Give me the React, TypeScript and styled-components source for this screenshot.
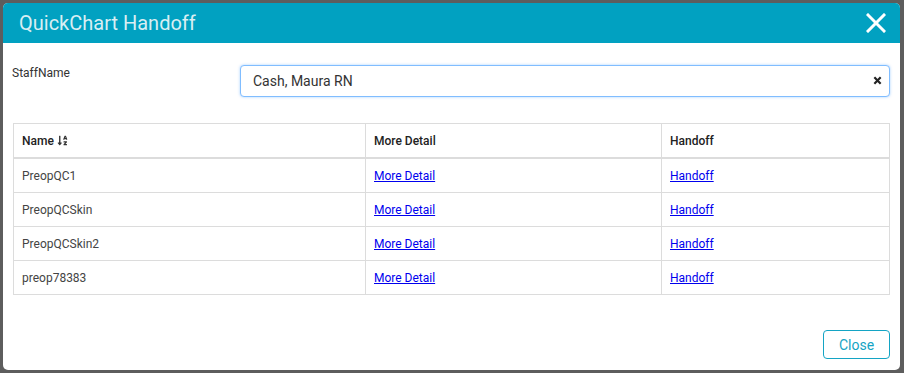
import styled, { createGlobalStyle } from 'styled-components'
import { FaSortAlphaDown } from 'react-icons/fa'

const GlobalStyle = createGlobalStyle`
  html, body {
    margin: 0;
    padding: 0;
    background: #5d5d5d;
    font-family: Roboto, 'Liberation Sans', sans-serif;
  }
`

const rows = ['PreopQC1', 'PreopQCSkin', 'PreopQCSkin2', 'preop78383']

const App = () => {
  return (
    <>
      <GlobalStyle />
      <Backdrop>
        <Modal>
          <Header>
            <Title>QuickChart Handoff</Title>
            <HeaderClose aria-label="close">
              <svg width="20" height="20" viewBox="0 0 20 20">
                <path d="M2 2 L18 18 M18 2 L2 18" stroke="#fff" strokeWidth="3" strokeLinecap="square" />
              </svg>
            </HeaderClose>
          </Header>

          <Body>
            <FormRow>
              <Label>StaffName</Label>
              <InputWrap>
                <Input defaultValue="Cash, Maura RN" />
                <ClearButton aria-label="clear">
                  <svg width="9" height="9" viewBox="0 0 10 10">
                    <path d="M1.5 1.5 L8.5 8.5 M8.5 1.5 L1.5 8.5" stroke="#222" strokeWidth="2.4" />
                  </svg>
                </ClearButton>
              </InputWrap>
            </FormRow>

            <Table>
              <colgroup>
                <col style={{ width: 352 }} />
                <col style={{ width: 296 }} />
                <col />
              </colgroup>
              <thead>
                <tr>
                  <Th>
                    <SortLabel>
                      Name <FaSortAlphaDown size={11} />
                    </SortLabel>
                  </Th>
                  <Th>More Detail</Th>
                  <Th>Handoff</Th>
                </tr>
              </thead>
              <tbody>
                {rows.map((name) => (
                  <tr key={name}>
                    <Td>{name}</Td>
                    <Td>
                      <Link href="#">More Detail</Link>
                    </Td>
                    <Td>
                      <Link href="#">Handoff</Link>
                    </Td>
                  </tr>
                ))}
              </tbody>
            </Table>
          </Body>

          <Footer>
            <CloseButton>Close</CloseButton>
          </Footer>
        </Modal>
      </Backdrop>
    </>
  )
}

const Backdrop = styled.div`
  width: 904px;
  height: 373px;
  padding: 3px 4px 3px 3px;
  box-sizing: border-box;
  background: #5d5d5d;
`

const Modal = styled.div`
  width: 897px;
  height: 367px;
  background: #ffffff;
  border-radius: 5px;
  overflow: hidden;
  display: flex;
  flex-direction: column;
`

const Header = styled.div`
  height: 40px;
  background: #01a1c1;
  display: flex;
  align-items: center;
  justify-content: space-between;
  padding: 0 14px 0 16px;
`

const Title = styled.h4`
  margin: 0;
  font-size: 20px;
  font-weight: 400;
  color: #d9eef3;
`

const HeaderClose = styled.button`
  border: none;
  background: none;
  padding: 0;
  display: flex;
  cursor: pointer;
`

const Body = styled.div`
  flex: 1;
  padding: 22px 10px 0 9px;
`

const FormRow = styled.div`
  display: flex;
  align-items: flex-start;
`

const Label = styled.label`
  width: 228px;
  font-size: 12px;
  color: #333;
  padding-top: 1px;
`

const InputWrap = styled.div`
  flex: 1;
  position: relative;
`

const Input = styled.input`
  width: 100%;
  height: 32px;
  box-sizing: border-box;
  border: 1px solid #80bdff;
  border-radius: 4px;
  box-shadow: 0 0 3px rgba(0, 123, 255, 0.35);
  padding: 0 30px 0 12px;
  font-family: Roboto, 'Liberation Sans', sans-serif;
  font-size: 14px;
  color: #333;
  outline: none;
`

const ClearButton = styled.button`
  position: absolute;
  right: 8px;
  top: 11px;
  border: none;
  background: none;
  padding: 0;
  display: flex;
`

const Table = styled.table`
  margin-top: 26px;
  margin-left: 1px;
  width: 877px;
  border-collapse: collapse;
  table-layout: fixed;
  font-size: 12px;
`

const Th = styled.th`
  height: 33px;
  padding: 0 8px;
  text-align: left;
  font-weight: 500;
  color: #222;
  border: 1px solid #dcdcdc;
  border-bottom-width: 2px;
`

const SortLabel = styled.span`
  display: inline-flex;
  align-items: center;
  gap: 3px;
  svg {
    color: #333;
  }
`

const Td = styled.td`
  height: 33px;
  padding: 0 8px;
  color: #444;
  border: 1px solid #dcdcdc;
`

const Link = styled.a`
  color: #0000ee;
  text-decoration: underline;
`

const Footer = styled.div`
  display: flex;
  justify-content: flex-end;
  padding: 0 10px 11px 0;
`

const CloseButton = styled.button`
  width: 67px;
  height: 29px;
  border: 1px solid #14a4c4;
  border-radius: 4px;
  background: #fff;
  color: #14a4c4;
  font-family: Roboto, 'Liberation Sans', sans-serif;
  font-size: 14px;
`

export default App
